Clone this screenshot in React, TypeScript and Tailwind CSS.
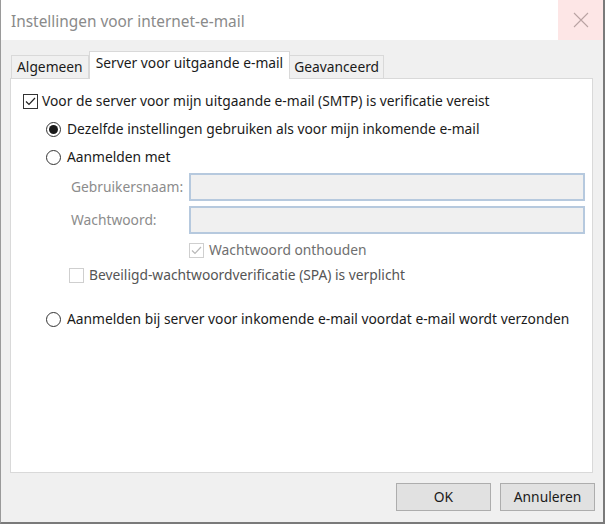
import React from "react";

const font = { fontFamily: '"Noto Sans", "Open Sans", sans-serif' };

function Check({ checked, disabled }: { checked?: boolean; disabled?: boolean }) {
  return (
    <div
      className={`w-[15px] h-[15px] border flex items-center justify-center shrink-0 ${
        disabled ? "border-[#cfcfcf] bg-white" : "border-[#333] bg-white"
      }`}
    >
      {checked && (
        <svg width="13" height="13" viewBox="0 0 13 13">
          <path
            d="M2 6.5 L5 9.5 L11 3"
            fill="none"
            stroke={disabled ? "#b8b8b8" : "#222"}
            strokeWidth="1.2"
          />
        </svg>
      )}
    </div>
  );
}

function Radio({ checked }: { checked?: boolean }) {
  return (
    <div className="w-[15px] h-[15px] rounded-full border border-[#333] bg-white flex items-center justify-center shrink-0">
      {checked && <div className="w-[9px] h-[9px] rounded-full bg-[#1a1a1a]" />}
    </div>
  );
}

export default function App() {
  return (
    <div
      className="w-[605px] h-[524px] bg-[#f0f0f0] border-l border-r-2 border-b-2 border-[#7a7a7a] border-l-[#9a9a9a] flex flex-col text-[13.8px] text-[#1a1a1a]"
      style={font}
    >
      <div className="h-[40px] bg-white flex items-center justify-between shrink-0">
        <div className="pl-[10px] pt-[3px] text-[15.4px] text-[#8a8a8a]">Instellingen voor internet-e-mail</div>
        <div className="w-[45px] h-[40px] bg-[#fde6e6] flex items-center justify-center">
          <svg width="16" height="16" viewBox="0 0 16 16">
            <path d="M1 1 L15 15 M15 1 L1 15" stroke="#b9a3a3" strokeWidth="1.1" />
          </svg>
        </div>
      </div>
      <div className="flex flex-col pl-[9px] pr-[10px] pt-[11px]">
        <div className="flex items-end h-[27px] pl-[1px]">
          <div className="h-[23px] px-[5px] border border-[#d9d9d9] border-b-0 bg-[#f0f0f0] flex items-center">Algemeen</div>
          <div className="h-[28px] -mb-[1px] px-[6px] border border-[#d9d9d9] border-b-0 bg-white flex items-center z-10 relative pb-[4px]">
            Server voor uitgaande e-mail
          </div>
          <div className="h-[23px] px-[4px] border border-[#d9d9d9] border-b-0 border-l-0 bg-[#f0f0f0] flex items-center">Geavanceerd</div>
        </div>
        <div className="h-[395px] bg-white border border-[#d9d9d9] flex flex-col pt-[14px] pl-[12px]">
          <div className="flex items-center gap-[4px] h-[17px]">
            <Check checked />
            <span>Voor de server voor mijn uitgaande e-mail (SMTP) is verificatie vereist</span>
          </div>
          <div className="flex flex-col pl-[23px] mt-[11px]">
            <div className="flex items-center gap-[6px] h-[17px]">
              <Radio checked />
              <span>Dezelfde instellingen gebruiken als voor mijn inkomende e-mail</span>
            </div>
            <div className="flex items-center gap-[6px] h-[17px] mt-[11px]">
              <Radio />
              <span>Aanmelden met</span>
            </div>
            <div className="flex flex-col pl-[25px] mt-[7px] text-[#8c8c8c]">
              <div className="flex items-center h-[28px]">
                <span className="w-[118px]">Gebruikersnaam:</span>
                <div className="flex-1 h-[28px] mr-[7px] bg-[#f0f0f0] border-2 border-[#b6c9de]" />
              </div>
              <div className="flex items-center h-[28px] mt-[5px]">
                <span className="w-[118px]">Wachtwoord:</span>
                <div className="flex-1 h-[28px] mr-[7px] bg-[#f0f0f0] border-2 border-[#b6c9de]" />
              </div>
              <div className="flex items-center gap-[5px] h-[17px] mt-[8px] pl-[118px] text-[#6f6f6f]">
                <Check checked disabled />
                <span>Wachtwoord onthouden</span>
              </div>
              <div className="flex items-center gap-[5px] h-[17px] mt-[8px] -ml-[2px]">
                <Check disabled />
                <span className="text-[#555]">Beveiligd-wachtwoordverificatie (SPA) is verplicht</span>
              </div>
            </div>
            <div className="flex items-center gap-[6px] h-[17px] mt-[27px]">
              <Radio />
              <span>Aanmelden bij server voor inkomende e-mail voordat e-mail wordt verzonden</span>
            </div>
          </div>
        </div>
      </div>
      <div className="flex justify-end gap-[9px] pr-[8px] mt-[10px]">
        <button className="w-[95px] h-[28px] bg-[#e1e1e1] border border-[#adadad]">OK</button>
        <button className="w-[95px] h-[28px] bg-[#e1e1e1] border border-[#adadad]">Annuleren</button>
      </div>
    </div>
  );
}
